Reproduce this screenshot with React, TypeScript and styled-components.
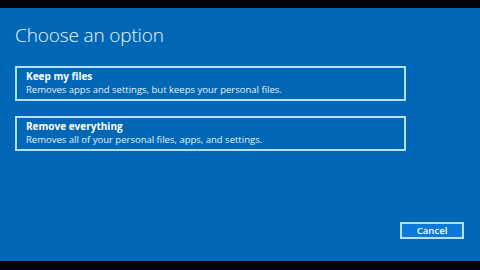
import React from "react";
import styled, { createGlobalStyle } from "styled-components";

const Global = createGlobalStyle`
  html, body { margin: 0; padding: 0; background: #05030d; }
  body { font-family: "Open Sans", "Noto Sans", sans-serif; }
`;

const Screen = styled.div`
  width: 480px;
  height: 270px;
  display: flex;
  flex-direction: column;
  background: #05030d;
`;

const Bar = styled.div<{ $h: number }>`
  height: ${(p) => p.$h}px;
  flex: none;
`;

const Panel = styled.div`
  flex: 1;
  background: #0067b6;
  display: flex;
  flex-direction: column;
  padding: 15px 15px 22px 15px;
  color: #ffffff;
`;

const Title = styled.h1`
  margin: 0 0 19px 0;
  font-size: 19px;
  font-weight: 300;
  line-height: 24px;
  letter-spacing: -0.15px;
  color: #eef6fc;
`;

const Options = styled.div`
  display: flex;
  flex-direction: column;
  gap: 15px;
  width: 391px;
`;

const Option = styled.div`
  border: 2px solid #b4e0f7;
  padding: 2px 9px 2px 9px;
  display: flex;
  flex-direction: column;
`;

const OptionTitle = styled.div`
  font-size: 10px;
  font-weight: 700;
  line-height: 13px;
  color: #ffffff;
`;

const OptionDesc = styled.div`
  font-size: 9.5px;
  line-height: 14px;
  color: #e4f1fb;
`;

const Footer = styled.div`
  margin-top: auto;
  display: flex;
  justify-content: flex-end;
  padding-right: 1px;
`;

const CancelButton = styled.button`
  width: 64px;
  height: 17px;
  border: 2px solid #b4e0f7;
  background: #0b79d6;
  color: #ffffff;
  font-family: "Open Sans", "Noto Sans", sans-serif;
  font-size: 9.6px;
  font-weight: 600;
  line-height: 12px;
  padding: 0;
`;

export default function App() {
  return (
    <>
      <Global />
      <Screen>
        <Bar $h={8} />
        <Panel>
          <Title>Choose an option</Title>
          <Options>
            <Option>
              <OptionTitle>Keep my files</OptionTitle>
              <OptionDesc>Removes apps and settings, but keeps your personal files.</OptionDesc>
            </Option>
            <Option>
              <OptionTitle>Remove everything</OptionTitle>
              <OptionDesc>Removes all of your personal files, apps, and settings.</OptionDesc>
            </Option>
          </Options>
          <Footer>
            <CancelButton>Cancel</CancelButton>
          </Footer>
        </Panel>
        <Bar $h={9} />
      </Screen>
    </>
  );
}
